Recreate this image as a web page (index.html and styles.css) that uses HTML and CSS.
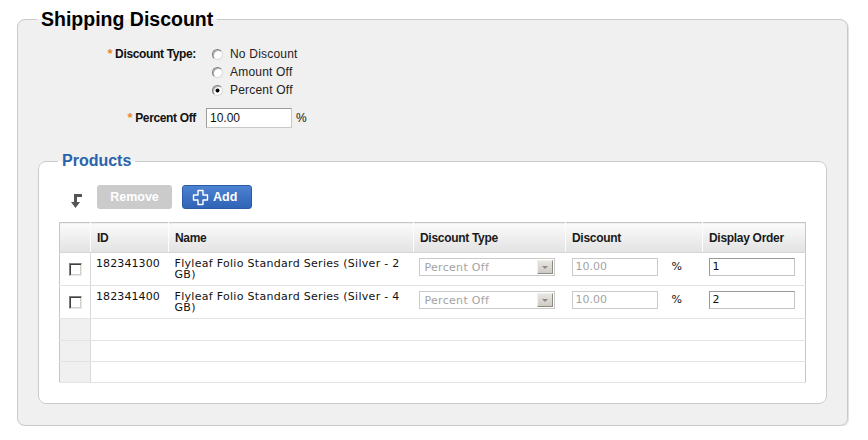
FILE: index.html
```html
<!DOCTYPE html>
<html>
<head>
<meta charset="utf-8">
<link rel="stylesheet" href="styles.css">
</head>
<body>
<fieldset class="panel">
  <legend class="panel-title">Shipping Discount</legend>
  <div class="field">
    <div class="label"><span class="req">*</span>Discount Type:</div>
    <div class="options">
      <div class="opt"><span class="radio"></span>No Discount</div>
      <div class="opt"><span class="radio"></span>Amount Off</div>
      <div class="opt"><span class="radio checked"></span>Percent Off</div>
    </div>
  </div>
  <div class="field field-input">
    <div class="label"><span class="req">*</span>Percent Off</div>
    <div class="value"><span class="textbox">10.00</span><span class="pct">%</span></div>
  </div>

  <fieldset class="sub">
    <legend class="sub-title">Products</legend>
    <div class="toolbar">
      <span class="move-icon">
        <svg width="12" height="14" viewBox="0 0 12 14"><path d="M3 0H11V3H6V8H9L4.5 14L0 8H3Z" fill="#555"/></svg>
      </span>
      <span class="btn btn-disabled">Remove</span>
      <span class="btn btn-primary">
        <svg class="plus" width="17" height="17" viewBox="0 0 17 17"><path d="M6 1.5H11V6H15.5V11H11V15.5H6V11H1.5V6H6Z" fill="none" stroke="#fff" stroke-width="1.4" stroke-linejoin="round"/></svg>
        Add
      </span>
    </div>
    <table class="grid">
      <colgroup>
        <col class="c-chk"><col class="c-id"><col class="c-name"><col class="c-type"><col class="c-disc"><col class="c-order">
      </colgroup>
      <thead>
        <tr>
          <th class="chk"></th>
          <th>ID</th>
          <th>Name</th>
          <th>Discount Type</th>
          <th>Discount</th>
          <th>Display Order</th>
        </tr>
      </thead>
      <tbody>
        <tr class="data">
          <td class="chk"><span class="checkbox"></span></td>
          <td class="id">182341300</td>
          <td class="name">Flyleaf Folio Standard Series (Silver - 2 GB)</td>
          <td><div class="select"><span>Percent Off</span><span class="arrow"></span></div></td>
          <td><span class="small-input disabled">10.00</span><span class="pct2">%</span></td>
          <td><span class="small-input">1</span></td>
        </tr>
        <tr class="data">
          <td class="chk"><span class="checkbox"></span></td>
          <td class="id">182341400</td>
          <td class="name">Flyleaf Folio Standard Series (Silver - 4 GB)</td>
          <td><div class="select"><span>Percent Off</span><span class="arrow"></span></div></td>
          <td><span class="small-input disabled">10.00</span><span class="pct2">%</span></td>
          <td><span class="small-input">2</span></td>
        </tr>
        <tr class="empty e1"><td class="chk"></td><td></td><td></td><td></td><td></td><td></td></tr>
        <tr class="empty"><td class="chk"></td><td></td><td></td><td></td><td></td><td></td></tr>
        <tr class="empty"><td class="chk"></td><td></td><td></td><td></td><td></td><td></td></tr>
      </tbody>
    </table>
  </fieldset>
</fieldset>
</body>
</html>
```

FILE: styles.css
```css
html, body {
  margin: 0;
  padding: 0;
  background: #fff;
  font-family: "Liberation Sans", Arial, sans-serif;
  font-size: 12px;
  color: #222;
}

.panel {
  box-sizing: border-box;
  width: 830px;
  margin: 9px 0 0 17px;
  padding: 0 0 21px 0;
  border: 1px solid #c9c9c9;
  border-radius: 8px;
  background: #f0f0f0;
  box-shadow: 1px 1px 0 #e2e2e2;
}

.panel-title {
  margin-left: 19px;
  padding: 0 4px;
  font-size: 19.5px;
  line-height: 20px;
  font-weight: bold;
  color: #000;
}

.field {
  display: flex;
  gap: 10px;
  margin-top: 16px;
}

.label {
  width: 178px;
  text-align: right;
  font-weight: bold;
  color: #111;
  line-height: 18px;
  letter-spacing: -0.35px;
}

.req {
  color: #e8892b;
  margin-right: 3px;
  font-size: 13px;
}

.options {
  display: flex;
  flex-direction: column;
}

.opt {
  display: flex;
  align-items: center;
  height: 18px;
  margin-left: 6px;
  letter-spacing: 0.2px;
}

.radio {
  box-sizing: border-box;
  width: 11px;
  height: 11px;
  margin-right: 7px;
  border-radius: 50%;
  border: 1px solid;
  border-color: #7c7c7c #dadada #dadada #7c7c7c;
  background: #fff;
  box-shadow: inset 1px 1px 0 #b0b0b0;
  display: flex;
  align-items: center;
  justify-content: center;
}

.radio.checked::after {
  content: "";
  width: 3px;
  height: 3px;
  border-radius: 50%;
  background: #000;
  box-shadow: 0 0 0 0.5px #000;
}

.field-input {
  margin-top: 9px;
  align-items: center;
}

.field-input .label {
  line-height: 20px;
}

.value {
  display: flex;
  align-items: center;
}

.textbox {
  box-sizing: border-box;
  width: 86px;
  height: 20px;
  border: 1px solid #9c9c9c;
  border-right-color: #c8c8c8;
  border-bottom-color: #c8c8c8;
  background: #fff;
  padding-left: 3px;
  line-height: 18px;
  color: #111;
}

.pct {
  margin-left: 4px;
  color: #111;
}

.sub {
  margin: 24px 20px 0 20px;
  padding: 0 20px 20px 20px;
  border: 1px solid #cacaca;
  border-radius: 8px;
  background: #fff;
}

.sub-title {
  margin-left: -1px;
  padding: 0 4px;
  font-size: 16px;
  line-height: 18px;
  font-weight: bold;
  color: #2a63ad;
}

.toolbar {
  display: flex;
  align-items: center;
  margin-top: 15px;
  height: 24px;
}

.move-icon {
  display: flex;
  margin-left: 12px;
  margin-top: 7px;
  width: 12px;
  height: 14px;
}

.btn {
  box-sizing: border-box;
  display: flex;
  align-items: center;
  height: 24px;
  border-radius: 3px;
  font-weight: bold;
  font-size: 12.5px;
  color: #fff;
}

.btn-disabled {
  margin-left: 14px;
  width: 75px;
  justify-content: center;
  background: #cbcbcb;
}

.btn-primary {
  margin-left: 10px;
  width: 70px;
  padding-left: 9px;
  background: linear-gradient(#4d82d2, #2f63b6);
  border: 1px solid #2b5aa6;
}

.plus {
  margin-right: 4px;
}

.grid {
  width: 746px;
  margin-top: 13px;
  border-collapse: collapse;
  table-layout: fixed;
  border: 1px solid #c6c6c6;
  font-family: "DejaVu Sans", Verdana, sans-serif;
  font-size: 11px;
  color: #111;
}

.c-chk { width: 31px; }
.c-id { width: 78px; }
.c-name { width: 245px; }
.c-type { width: 152px; }
.c-disc { width: 137px; }
.c-order { width: 103px; }

.grid th {
  height: 29px;
  padding: 0 6px;
  text-align: left;
  font-family: "Liberation Sans", Arial, sans-serif;
  font-size: 12px;
  font-weight: bold;
  letter-spacing: -0.3px;
  color: #1a1a1a;
  background: linear-gradient(#fbfbfb, #e2e2e2);
  border-left: 1px solid #fdfdfd;
  border-bottom: 1px solid #d6d6d6;
}

.grid th.chk {
  border-left: none;
}

.grid td {
  padding: 0 6px;
  border-bottom: 1px solid #e3e3e3;
  vertical-align: top;
}

.grid td.id {
  padding-left: 5px;
  letter-spacing: 0.1px;
}

.grid td.name {
  letter-spacing: 0.3px;
}

.grid td.chk {
  border-right: 1px solid #d9d9d9;
  padding: 0;
  text-align: center;
}

.data td {
  height: 22px;
  padding-top: 5px;
  padding-bottom: 5px;
  line-height: 11px;
}

.data td.chk {
  vertical-align: middle;
  padding: 0;
}

.empty td {
  height: 20px;
  padding: 0;
}

.empty.e1 td {
  height: 21px;
}

.empty td.chk {
  background: #f0f0f0;
}

.checkbox {
  display: inline-block;
  box-sizing: border-box;
  width: 13px;
  height: 13px;
  margin-top: 1px;
  border: 1px solid;
  border-color: #808080 #e8e8e8 #e8e8e8 #808080;
  box-shadow: inset 1px 1px 0 #404040, inset -1px -1px 0 #d4d0c8;
  background: #fff;
  vertical-align: middle;
}

.select {
  box-sizing: border-box;
  width: 136px;
  height: 18px;
  margin-left: -1px;
  border: 1px solid #cacaca;
  display: flex;
  align-items: center;
  justify-content: space-between;
  padding: 0 1px 0 5px;
  color: #a3a3a3;
  background: #fff;
  letter-spacing: 0.3px;
}

.arrow {
  box-sizing: border-box;
  width: 16px;
  height: 14px;
  border: 1px solid;
  border-color: #f2f0ec #8e8a84 #8e8a84 #f2f0ec;
  background: linear-gradient(#e8e5e0, #cfcbc4);
  display: flex;
  align-items: center;
  justify-content: center;
}

.arrow::after {
  content: "";
  width: 0;
  height: 0;
  border-left: 3px solid transparent;
  border-right: 3px solid transparent;
  border-top: 3px solid #8a8a8a;
}

.small-input {
  box-sizing: border-box;
  display: inline-block;
  width: 86px;
  height: 18px;
  border: 1px solid #9a9a9a;
  border-right-color: #c4c4c4;
  border-bottom-color: #c4c4c4;
  padding-left: 3px;
  line-height: 16px;
  color: #111;
  background: #fff;
  vertical-align: top;
}

.small-input.disabled {
  border: 1px solid #cacaca;
  color: #a3a3a3;
}

.pct2 {
  display: inline-block;
  margin-left: 14px;
  line-height: 18px;
  vertical-align: top;
}
```
